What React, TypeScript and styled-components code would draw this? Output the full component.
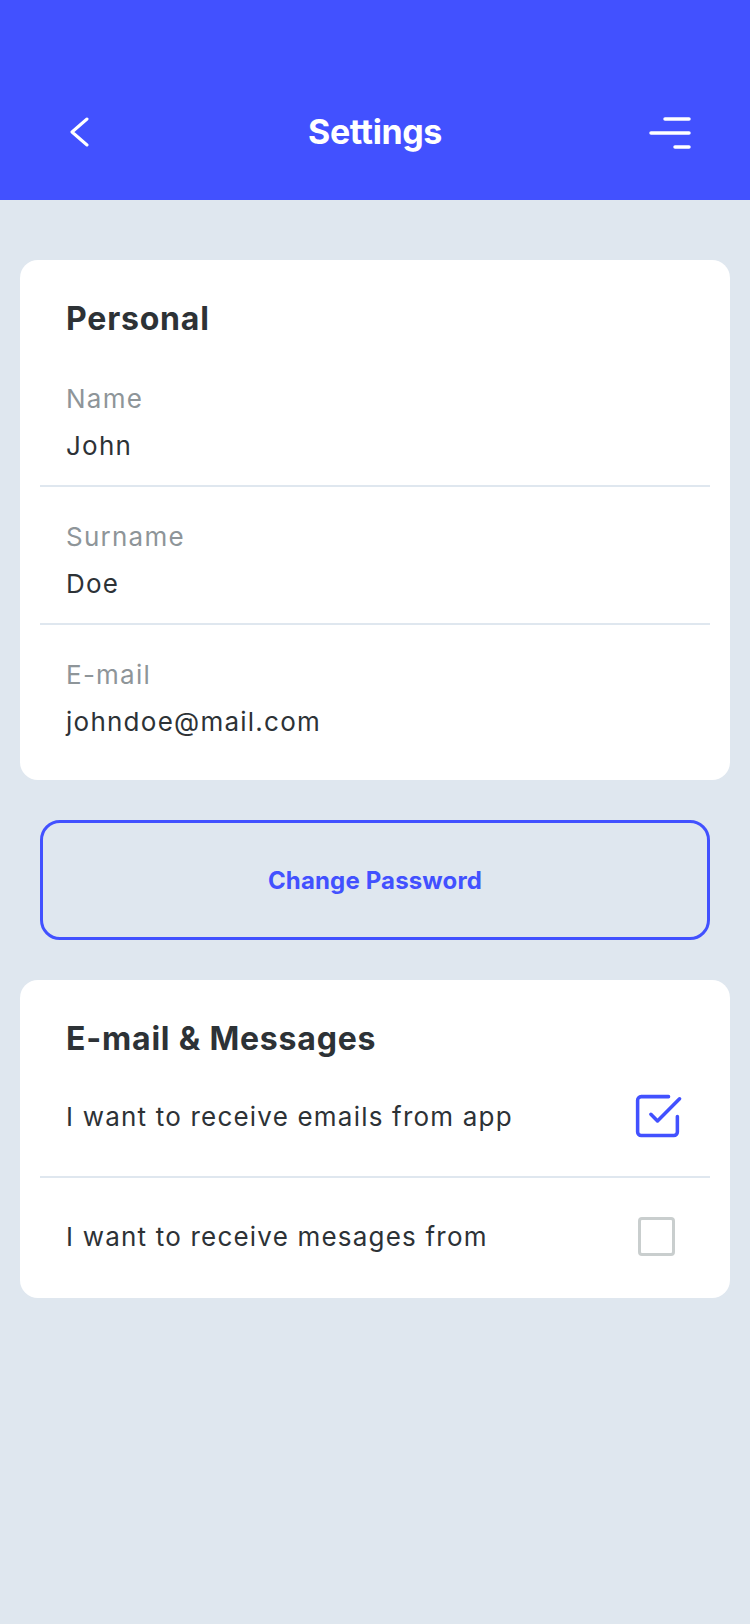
import React from "react";
import styled, { createGlobalStyle } from "styled-components";

const GlobalStyle = createGlobalStyle`
  * {
    box-sizing: border-box;
  }
  body {
    margin: 0;
    background: #dfe7ef;
    font-family: Inter, "Noto Sans", "Liberation Sans", sans-serif;
    -webkit-font-smoothing: antialiased;
  }
`;

const Page = styled.div`
  min-height: 1624px;
  width: 750px;
  background: #dfe7ef;
`;

const Header = styled.header`
  height: 200px;
  background: #4251ff;
  padding-top: 100px;
`;

const NavBar = styled.nav`
  height: 64px;
  display: grid;
  grid-template-columns: 1fr auto 1fr;
  align-items: center;
`;

const NavSide = styled.div<{ $end?: boolean }>`
  display: flex;
  justify-content: ${(p) => (p.$end ? "flex-end" : "flex-start")};
  padding: ${(p) => (p.$end ? "0 58px 0 0" : "0 0 0 70px")};
`;

const Title = styled.h1`
  margin: 0;
  font-size: 34px;
  font-weight: 700;
  letter-spacing: -0.4px;
  color: #ffffff;
  line-height: 40px;
`;

const Main = styled.main`
  display: flex;
  flex-direction: column;
  gap: 40px;
  padding: 60px 20px;
`;

const Card = styled.section<{ $bottom?: number }>`
  background: #ffffff;
  border-radius: 18px;
  padding: 39.5px 20px ${(p) => p.$bottom ?? 19.5}px;
`;

const CardTitle = styled.h2<{ $gap?: number }>`
  margin: 0 0 ${(p) => p.$gap ?? 0}px;
  padding: 0 26px;
  font-size: 32px;
  line-height: 38px;
  font-weight: 700;
  letter-spacing: 0.8px;
  color: #2d3236;
`;

const Field = styled.div`
  padding: 34px 26px 23px;

  & + & {
    border-top: 2px solid #dfe7ef;
  }
`;

const Label = styled.div`
  font-size: 26px;
  line-height: 32px;
  letter-spacing: 1.25px;
  color: #8e9599;
  margin-bottom: 15px;
`;

const Value = styled.div`
  font-size: 26px;
  line-height: 32px;
  letter-spacing: 1.25px;
  color: #2d3236;
`;

const OutlineButton = styled.button`
  height: 120px;
  margin: 0 20px;
  border: 3.5px solid #4251ff;
  border-radius: 20px;
  background: transparent;
  color: #4251ff;
  font-family: inherit;
  font-size: 24px;
  font-weight: 700;
  letter-spacing: 0.15px;
  cursor: pointer;
`;

const OptionRow = styled.label`
  display: flex;
  align-items: center;
  justify-content: space-between;
  padding: 43px 26px;

  & + & {
    border-top: 2px solid #dfe7ef;
  }
`;

const OptionText = styled.span`
  font-size: 26px;
  line-height: 32px;
  letter-spacing: 1.2px;
  color: #2d3236;
`;

const CheckSlot = styled.span`
  width: 53px;
  height: 32px;
  display: flex;
  align-items: center;
`;

const EmptyBox = styled.span`
  width: 37px;
  height: 39px;
  margin-left: 7px;
  border: 3.5px solid #c9cece;
  border-radius: 4px;
  background: #ffffff;
`;

const BackIcon = () => (
  <svg width="20" height="30" viewBox="0 0 20 30" fill="none">
    <polyline
      points="17,2 2,15 17,28"
      stroke="#fff"
      strokeWidth="3"
      strokeLinecap="round"
      strokeLinejoin="round"
    />
  </svg>
);

const MenuIcon = () => (
  <svg width="44" height="34" viewBox="0 0 44 34" fill="none">
    <g stroke="#fff" strokeWidth="3.5" strokeLinecap="round">
      <line x1="17" y1="4" x2="41" y2="4" />
      <line x1="3" y1="18" x2="41" y2="18" />
      <line x1="27" y1="32" x2="41" y2="32" />
    </g>
  </svg>
);

const CheckedIcon = () => (
  <svg
    width="53"
    height="53"
    viewBox="0 0 24 24"
    fill="none"
    stroke="#4251ff"
    strokeWidth="1.6"
    strokeLinecap="round"
    strokeLinejoin="round"
    style={{ flexShrink: 0 }}
  >
    <path d="M9 11l3 3L22 4" />
    <path d="M21 12v7a1.6 1.6 0 0 1-1.6 1.6H4.6A1.6 1.6 0 0 1 3 19V4.6A1.6 1.6 0 0 1 4.6 3H17" />
  </svg>
);

const fields = [
  { label: "Name", value: "John" },
  { label: "Surname", value: "Doe" },
  { label: "E-mail", value: "johndoe@mail.com" },
];

const options = [
  { text: "I want to receive emails from app", checked: true },
  { text: "I want to receive mesages from", checked: false },
];

export default function App() {
  return (
    <Page>
      <GlobalStyle />
      <Header>
        <NavBar>
          <NavSide>
            <BackIcon />
          </NavSide>
          <Title>Settings</Title>
          <NavSide $end>
            <MenuIcon />
          </NavSide>
        </NavBar>
      </Header>

      <Main>
        <Card>
          <CardTitle $gap={11}>Personal</CardTitle>
          {fields.map((f) => (
            <Field key={f.label}>
              <Label>{f.label}</Label>
              <Value>{f.value}</Value>
            </Field>
          ))}
        </Card>

        <OutlineButton>Change Password</OutlineButton>

        <Card $bottom={2}>
          <CardTitle>E-mail &amp; Messages</CardTitle>
          {options.map((o) => (
            <OptionRow key={o.text}>
              <OptionText>{o.text}</OptionText>
              <CheckSlot>{o.checked ? <CheckedIcon /> : <EmptyBox />}</CheckSlot>
            </OptionRow>
          ))}
        </Card>
      </Main>
    </Page>
  );
}
